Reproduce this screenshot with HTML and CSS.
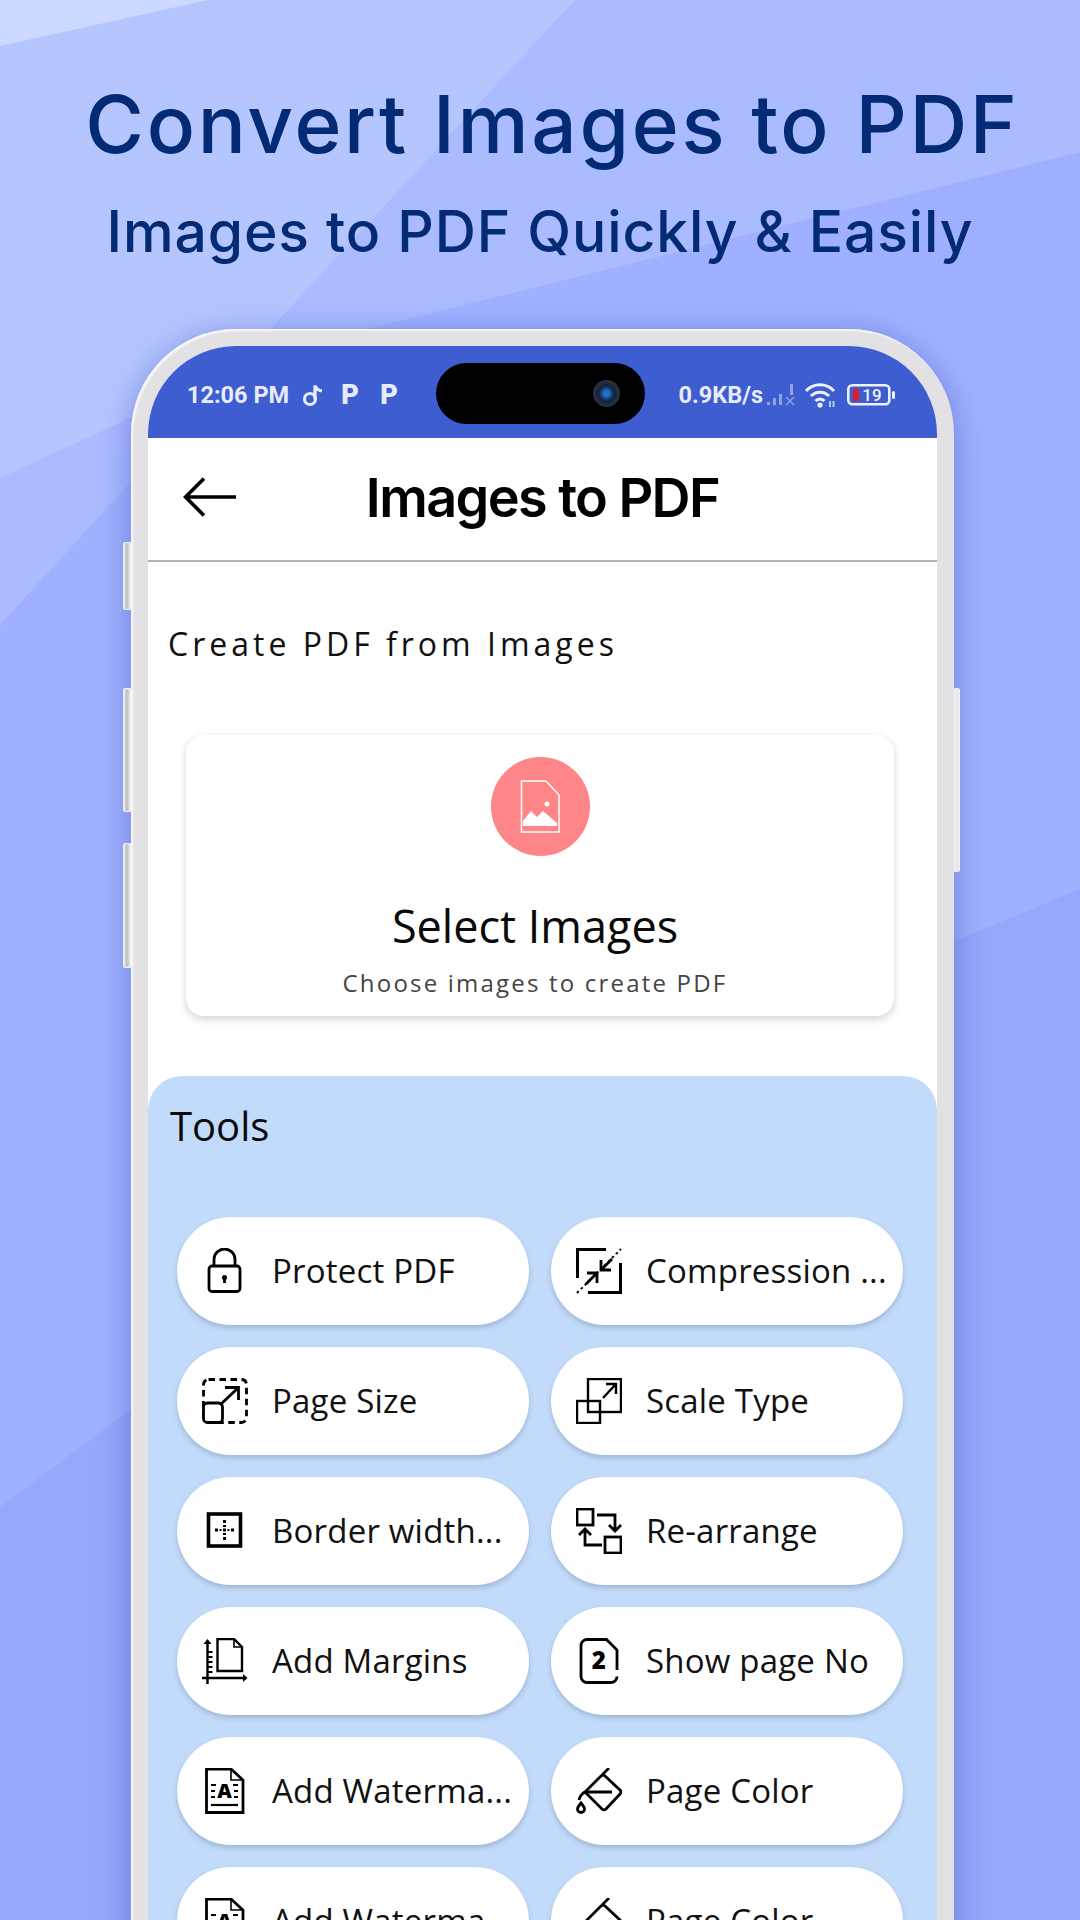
FILE: index.html
```html
<!DOCTYPE html>
<html>
<head>
  <title>Images to PDF</title>
  <meta charset="UTF-8">
  <link rel="stylesheet" href="styles.css">
</head>
<body>
  <svg class="backdrop" width="1080" height="1920" viewBox="0 0 1080 1920">
    <rect width="1080" height="1920" fill="#95a8fc"/>
    <polygon points="0,0 1080,0 1080,889 955,941 130,1410 0,1507" fill="#9fb1fe"/>
    <polygon points="575,0 1080,0 1080,152 372,328 231,372" fill="#aabbff"/>
    <polygon points="0,478 231,372 0,625" fill="#aabbff"/>
    <polygon points="0,0 575,0 231,372 0,478" fill="#b5c6ff"/>
    <polygon points="0,0 208,0 0,46" fill="#cbd8ff"/>
  </svg>

  <div class="hero">
    <h1>Convert Images to PDF</h1>
    <h2>Images to PDF Quickly &amp; Easily</h2>
  </div>

  <div class="phone">
    <span class="side-btn btn-a"></span>
    <span class="side-btn btn-b"></span>
    <span class="side-btn btn-c"></span>
    <span class="side-btn btn-d"></span>

    <div class="screen">
      <!-- status bar -->
      <div class="status-bar">
        <div class="status-left">
          <span class="status-text">12:06 PM</span>
          <svg class="note" width="22" height="24" viewBox="0 0 22 24">
            <circle cx="8" cy="16" r="5.500" fill="none" stroke="#e8ecff" stroke-width="3.200"/>
            <path d="M13 16V2.500c1 3 3.500 5 7 5.500" fill="none" stroke="#e8ecff" stroke-width="3.200"/>
          </svg>
          <span class="status-p">P</span>
          <span class="status-p">P</span>
        </div>
        <div class="camera-pill"><span class="lens"></span></div>
        <div class="status-right">
          <span class="status-text">0.9KB/s</span>
          <svg class="signal" width="29" height="24" viewBox="0 0 29 24">
            <g fill="#8fa2e6">
              <rect x="0" y="19" width="3" height="3"/>
              <rect x="6" y="15" width="3" height="7"/>
              <rect x="12" y="11" width="3" height="11"/>
              <rect x="23" y="1" width="3" height="11"/>
              <path d="M18 14h2l3 3 3-3h2l-4 4 4 4h-2l-3-3-3 3h-2l4-4Z"/>
            </g>
          </svg>
          <svg class="wifi" width="32" height="26" viewBox="0 0 32 26">
            <g fill="none" stroke="#eef1ff" stroke-width="3">
              <path d="M1 9a19 19 0 0 1 28 0"/>
              <path d="M6 14a12.500 12.500 0 0 1 18 0"/>
              <path d="M10.500 19a6 6 0 0 1 9 0"/>
            </g>
            <circle cx="15" cy="23" r="2.600" fill="#eef1ff"/>
            <rect x="24" y="19" width="2" height="6" fill="#b9c5f2"/>
            <rect x="27.500" y="19" width="2" height="6" fill="#b9c5f2"/>
          </svg>
          <svg class="battery" width="48" height="22" viewBox="0 0 48 22">
            <rect x="1.300" y="1.300" width="41" height="19" rx="4" fill="none" stroke="#eef1ff" stroke-width="2.600"/>
            <rect x="6" y="5" width="6" height="12" fill="#e01b2f"/>
            <text x="25" y="17" class="battery-num">19</text>
            <rect x="45" y="7" width="3" height="8" rx="1.500" fill="#eef1ff"/>
          </svg>
        </div>
      </div>

      <!-- app header -->
      <div class="app-header">
        <svg class="back" width="54" height="42" viewBox="0 0 54 42">
          <path d="M53 21H2.500M21 2.500L2.500 21 21 39.500" fill="none" stroke="#000" stroke-width="3.600"/>
        </svg>
        <div class="app-title">Images to PDF</div>
      </div>

      <div class="section-title">Create PDF from Images</div>

      <div class="select-card">
        <div class="select-icon">
          <svg width="40" height="53" viewBox="0 0 40 53">
            <path d="M1.500 1H26L39 15V52H1.500Z" fill="none" stroke="#fff" stroke-width="1.500"/>
            <circle cx="27" cy="24" r="2.500" fill="#fff"/>
            <path d="M3 46V41L11 31l6 6 6-6 14 12v3Z" fill="#fff"/>
          </svg>
        </div>
        <div class="select-name">Select Images</div>
        <div class="select-sub">Choose images to create PDF</div>
      </div>

      <div class="tools">
        <div class="tools-title">Tools</div>
        <div class="tool-grid">

          <div class="tool">
            <svg class="tool-icon" width="46" height="46" viewBox="0 0 46 46">
              <rect x="7" y="18" width="31" height="25.500" rx="3"/>
              <path d="M12 18v-6.500a10.500 10.500 0 0 1 21 0V18"/>
              <circle class="solid" cx="22.500" cy="29.500" r="2.500"/>
              <path d="M22.500 30v5"/>
            </svg>
            <span>Protect PDF</span>
          </div>

          <div class="tool">
            <svg class="tool-icon" width="46" height="46" viewBox="0 0 46 46">
              <path d="M1.500 30V1.500H30M12 44.500H44.500V15" stroke-width="3"/>
              <path d="M1 45L45 1" stroke-width="2" stroke-dasharray="2.500 3"/>
              <path d="M36 11L25 22M25 12v10h10M10 36l11-11M21 35V25H11" stroke-width="2.800"/>
            </svg>
            <span>Compression ...</span>
          </div>

          <div class="tool">
            <svg class="tool-icon" width="46" height="46" viewBox="0 0 46 46">
              <rect x="1.500" y="1.500" width="43" height="43" rx="5" stroke-dasharray="6.500 4.500"/>
              <rect class="patch" x="1.500" y="25" width="19" height="19.500" rx="4"/>
              <path d="M18 27L36 10M23 9.500h13.500V22"/>
            </svg>
            <span>Page Size</span>
          </div>

          <div class="tool">
            <svg class="tool-icon" width="46" height="46" viewBox="0 0 46 46">
              <rect x="1" y="23" width="23" height="22" stroke-width="2.400"/>
              <rect x="12" y="1" width="33" height="33" stroke-width="2.400"/>
              <path d="M27 20L40 6M30 6h10v10" stroke-width="2.400"/>
            </svg>
            <span>Scale Type</span>
          </div>

          <div class="tool">
            <svg class="tool-icon" width="46" height="46" viewBox="0 0 46 46">
              <rect x="6.500" y="6" width="32" height="32" stroke-width="3.600"/>
              <g class="solid">
                <rect x="21" y="12" width="3" height="3"/>
                <rect x="21" y="17" width="3" height="2"/>
                <rect x="21" y="20.500" width="3" height="3"/>
                <rect x="21" y="25" width="3" height="2"/>
                <rect x="21" y="29" width="3" height="3"/>
                <rect x="13" y="20.500" width="3" height="3"/>
                <rect x="17.500" y="21" width="2" height="2"/>
                <rect x="25.500" y="21" width="2" height="2"/>
                <rect x="29" y="20.500" width="3" height="3"/>
              </g>
            </svg>
            <span>Border width...</span>
          </div>

          <div class="tool">
            <svg class="tool-icon" width="46" height="46" viewBox="0 0 46 46">
              <rect x="1" y="1" width="16" height="16"/>
              <rect x="29" y="29" width="16" height="16"/>
              <path d="M21 7H39V23M33 17l6 6 6-6"/>
              <path d="M26 37H9V21M3 27l6-6 6 6"/>
            </svg>
            <span>Re-arrange</span>
          </div>

          <div class="tool">
            <svg class="tool-icon" width="46" height="46" viewBox="0 0 46 46">
              <path d="M15.500 1H32L40 9V33H15.500Z" stroke-width="2.400"/>
              <path d="M32 1V9H40" stroke-width="1.600"/>
              <path d="M5.500 3V46M0 40H44" stroke-width="2.400"/>
              <path d="M1.500 6L5.500 1l4 5ZM41 36l4.500 4-4.500 4Z" class="solid"/>
              <path d="M5.500 14h5M5.500 19h5M5.500 24h5M5.500 29h5M5.500 34h5" stroke-width="2.200"/>
            </svg>
            <span>Add Margins</span>
          </div>

          <div class="tool">
            <svg class="tool-icon" width="46" height="46" viewBox="0 0 46 46">
              <path d="M41 32V12L30.500 1.500H11a6 6 0 0 0-6 6V38.500a6 6 0 0 0 6 6H35a6 6 0 0 0 6-6" stroke-width="2.800"/>
              <text x="23" y="31" class="icon-two">2</text>
            </svg>
            <span>Show page No</span>
          </div>

          <div class="tool">
            <svg class="tool-icon" width="46" height="46" viewBox="0 0 46 46">
              <path d="M4.500 1H29L41 12V44.500H4.500Z" stroke-width="2.800"/>
              <path d="M29 1V12H41" stroke-width="1.600"/>
              <text x="22.500" y="30" class="icon-a">A</text>
              <path d="M9 17h5M9 23h4M9 29h4M31 17h5M32 23h4M32 29h4" stroke-width="2.200"/>
              <path d="M9 37H36" stroke-width="2.200"/>
            </svg>
            <span>Add Waterma...</span>
          </div>

          <div class="tool">
            <svg class="tool-icon" width="46" height="46" viewBox="0 0 46 46">
              <path d="M9 24L25 8a3 3 0 0 1 4 0L44 22a3 3 0 0 1 0 4L30 41a3 3 0 0 1-4 0Z"/>
              <path d="M9 24H36M26 7L33 0"/>
              <path d="M9 24C5 26 4 28 3 32"/>
              <path d="M5 35c2.500 3 3.500 4.500 3.500 6a3.500 3.500 0 0 1-7 0c0-1.500 1-3 3.500-6Z"/>
            </svg>
            <span>Page Color</span>
          </div>

          <div class="tool">
            <svg class="tool-icon" width="46" height="46" viewBox="0 0 46 46">
              <path d="M4.500 1H29L41 12V44.500H4.500Z" stroke-width="2.800"/>
              <path d="M29 1V12H41" stroke-width="1.600"/>
              <text x="22.500" y="30" class="icon-a">A</text>
              <path d="M9 17h5M9 23h4M9 29h4M31 17h5M32 23h4M32 29h4" stroke-width="2.200"/>
              <path d="M9 37H36" stroke-width="2.200"/>
            </svg>
            <span>Add Waterma...</span>
          </div>

          <div class="tool">
            <svg class="tool-icon" width="46" height="46" viewBox="0 0 46 46">
              <path d="M9 24L25 8a3 3 0 0 1 4 0L44 22a3 3 0 0 1 0 4L30 41a3 3 0 0 1-4 0Z"/>
              <path d="M9 24H36M26 7L33 0"/>
              <path d="M9 24C5 26 4 28 3 32"/>
              <path d="M5 35c2.500 3 3.500 4.500 3.500 6a3.500 3.500 0 0 1-7 0c0-1.500 1-3 3.500-6Z"/>
            </svg>
            <span>Page Color</span>
          </div>

        </div>
      </div>
    </div>
  </div>
</body>
</html>
```

FILE: styles.css
```css
html, body {
  margin: 0;
  padding: 0;
}

body {
  position: relative;
  width: 1080px;
  height: 1920px;
  overflow: hidden;
  font-family: 'Open Sans', sans-serif;
  background-color: #9fb1fe;
}

.backdrop {
  position: absolute;
  left: 0;
  top: 0;
}

.hero {
  position: relative;
  height: 329px;
  box-sizing: border-box;
  padding-top: 79px;
  text-align: center;
  color: #032a74;
  font-family: Inter, sans-serif;
}

h1 {
  margin: 0 0 0 25px;
  font-size: 80px;
  line-height: 90px;
  font-weight: 500;
  letter-spacing: 2.700px;
}

h2 {
  margin: 28px 0 0;
  font-size: 57px;
  line-height: 70px;
  font-weight: 500;
  letter-spacing: 0.900px;
}

.phone {
  position: relative;
  width: 823px;
  height: 1700px;
  margin-left: 131px;
  box-sizing: border-box;
  padding: 17px 17px 0;
  border-radius: 105px 105px 0 0;
  background: #e2e2e4;
  box-shadow: 0 6px 32px rgba(62, 78, 190, 0.5), inset 2px 2px 2px #f8f8f9;
}

.side-btn {
  position: absolute;
  width: 8px;
  background: linear-gradient(90deg, #f2f2f3, #bdbdc2 40%, #e6e6e8);
  border: 1px solid #f2f2f3;
  box-sizing: border-box;
  border-radius: 2px 0 0 2px;
}

.btn-a { left: -8px; top: 213px; height: 68px; }
.btn-b { left: -8px; top: 359px; height: 124px; }
.btn-c { left: -8px; top: 514px; height: 125px; }
.btn-d { right: -6px; width: 6px; top: 359px; height: 184px; border-radius: 0 2px 2px 0; background: #e9e9eb; }

.screen {
  height: 1700px;
  overflow: hidden;
  border-radius: 88px 88px 0 0;
  background: white;
}

.status-bar {
  position: relative;
  height: 92px;
  box-sizing: border-box;
  padding: 6px 42px 0 39px;
  display: flex;
  justify-content: space-between;
  align-items: center;
  background-color: #3d5dd1;
}

.status-left, .status-right {
  display: flex;
  align-items: center;
}

.status-text {
  font-family: Roboto, sans-serif;
  font-weight: 700;
  font-size: 23.500px;
  color: #e8ecff;
}

.note {
  margin-left: 13px;
}

.status-p {
  margin-left: 17px;
  width: 22px;
  font-family: Roboto, sans-serif;
  font-weight: 900;
  font-size: 27px;
  color: #e8ecff;
}

.signal {
  margin-left: 4px;
}

.wifi {
  margin-left: 9px;
}

.battery {
  margin-left: 10px;
}

.battery-num {
  font-family: Roboto, sans-serif;
  font-weight: 500;
  font-size: 17px;
  fill: #eef1ff;
  text-anchor: middle;
}

.camera-pill {
  position: absolute;
  left: 288px;
  top: 17px;
  width: 209px;
  height: 61px;
  border-radius: 31px;
  background: #000;
}

.lens {
  position: absolute;
  right: 25px;
  top: 17px;
  width: 27px;
  height: 27px;
  border-radius: 50%;
  background: radial-gradient(circle, #1f6fc8 0 14%, #14233a 40%, #39464e 100%);
}

.app-header {
  position: relative;
  height: 124px;
  box-sizing: border-box;
  padding-bottom: 3px;
  display: flex;
  align-items: center;
  justify-content: center;
  border-bottom: 2px solid #b3b3b3;
}

.back {
  position: absolute;
  left: 35px;
  top: 38px;
}

.app-title {
  font-family: Inter, sans-serif;
  font-size: 54px;
  font-weight: 600;
  letter-spacing: -1.600px;
  color: #000;
}

.section-title {
  margin: 60px 0 0 20px;
  font-size: 32px;
  line-height: 44px;
  letter-spacing: 4px;
  color: #111;
}

.select-card {
  margin: 69px 43px 0 38px;
  height: 281px;
  box-sizing: border-box;
  padding-top: 22px;
  text-align: center;
  background: white;
  border-radius: 18px;
  box-shadow: 0 3px 8px rgba(0, 0, 0, 0.18);
}

.select-icon {
  width: 99px;
  height: 99px;
  margin: 0 auto;
  display: flex;
  align-items: center;
  justify-content: center;
  border-radius: 50%;
  background-color: #fe8688;
}

.select-name {
  margin-top: 41px;
  padding-right: 10px;
  font-size: 45px;
  line-height: 58px;
  color: #0a0a0a;
}

.select-sub {
  margin-top: 11px;
  padding-right: 10px;
  font-size: 24px;
  line-height: 34px;
  letter-spacing: 2.200px;
  color: #444;
}

.tools {
  margin-top: 60px;
  height: 900px;
  box-sizing: border-box;
  padding: 25px 29px 0;
  border-radius: 34px 34px 0 0;
  background-color: #c3dbfa;
}

.tools-title {
  margin-left: -7px;
  font-size: 40px;
  line-height: 50px;
  color: #0a0a0a;
}

.tool-grid {
  margin-top: 66px;
  display: grid;
  grid-template-columns: 352px 352px;
  grid-auto-rows: 108px;
  gap: 22px;
}

.tool {
  display: flex;
  align-items: center;
  padding-left: 25px;
  gap: 24px;
  background: white;
  border-radius: 54px;
  box-shadow: 0 3px 5px rgba(70, 90, 130, 0.28);
  font-size: 33px;
  letter-spacing: 0.2px;
  color: #111;
  white-space: nowrap;
}

.tool span {
  margin-top: -2px;
}

.tool-icon {
  flex: none;
  fill: none;
  stroke: #000;
  stroke-width: 2.800;
}

.tool-icon .solid {
  fill: #000;
  stroke: none;
}

.tool-icon .patch {
  fill: white;
  stroke-dasharray: none;
}

.icon-two, .icon-a {
  font-family: 'Open Sans', sans-serif;
  font-weight: 800;
  fill: #000;
  stroke: none;
  text-anchor: middle;
}

.icon-two { font-size: 24px; }
.icon-a { font-size: 20px; }
```
